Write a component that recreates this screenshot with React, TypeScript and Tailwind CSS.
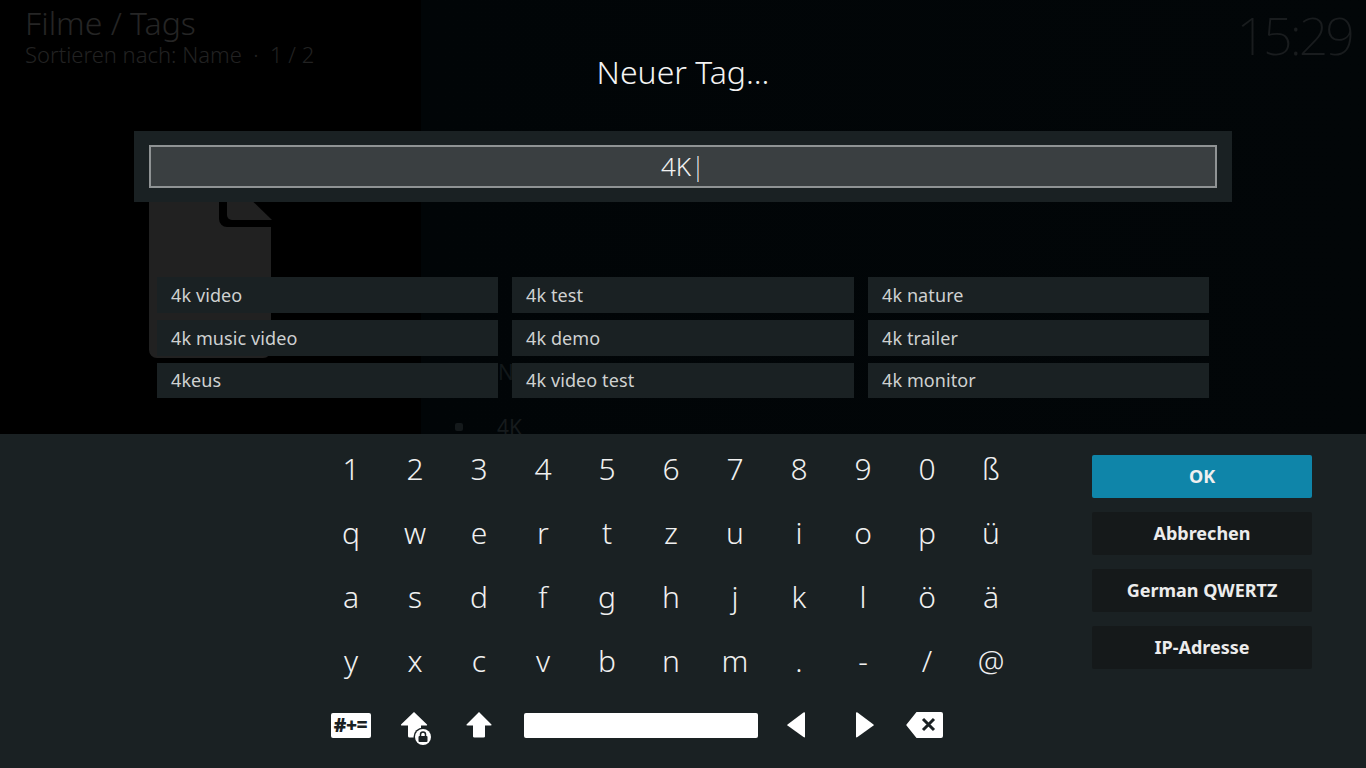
const rows = [
  ["1", "2", "3", "4", "5", "6", "7", "8", "9", "0", "ß"],
  ["q", "w", "e", "r", "t", "z", "u", "i", "o", "p", "ü"],
  ["a", "s", "d", "f", "g", "h", "j", "k", "l", "ö", "ä"],
  ["y", "x", "c", "v", "b", "n", "m", ".", "-", "/", "@"],
];

const suggestions = [
  ["4k video", "4k test", "4k nature"],
  ["4k music video", "4k demo", "4k trailer"],
  ["4keus", "4k video test", "4k monitor"],
];

const actions = ["Abbrechen", "German QWERTZ", "IP-Adresse"];

function Background() {
  return (
    <div className="absolute inset-0 flex bg-black">
      {/* LEFT COLUMN */}
      <div className="relative w-[421px] shrink-0 bg-black">
        <svg className="absolute left-[149px] top-[150px]" width="123" height="208" viewBox="0 0 123 208">
          <path d="M0 6 a6 6 0 0 1 6 -6 H70 V69 a8 8 0 0 0 8 8 H122 V200 a8 8 0 0 1 -8 8 H8 a8 8 0 0 1 -8 -8 Z" fill="#212121" />
          <path d="M78 34 H86 L123 70 H83 a5 5 0 0 1 -5 -5 Z" fill="#212121" />
        </svg>
      </div>
      {/* RIGHT COLUMN */}
      <div className="relative flex-1 bg-gradient-to-r from-[#010507] to-[#020608]">
        <p className="absolute left-[77px] top-[357px] text-[21px] text-[#12181a]">N</p>
        <span className="absolute left-[34px] top-[423px] h-2 w-2 rounded-[2px] bg-[#14191b]" />
        <p className="absolute left-[76px] top-[412px] text-[21px] text-[#161b1d]">4K</p>
      </div>
      {/* HEADER */}
      <div className="absolute left-[25px] top-[2px] font-light">
        <p className="text-[32px] leading-[42px] text-[#252525]">Filme / Tags</p>
        <p className="mt-[-3px] text-[22px] leading-[26px] text-[#222222]">Sortieren nach: Name &nbsp;·&nbsp; 1 / 2</p>
      </div>
      <p className="absolute right-[14px] top-0 text-[52px] leading-[70px] font-extralight tracking-[-3px] text-[#191c1e]">15:29</p>
    </div>
  );
}

function Key({ children }: { children: React.ReactNode }) {
  return <div className="flex h-16 w-16 items-center justify-center">{children}</div>;
}

export default function App() {
  return (
    <div className="relative h-[768px] w-[1366px] overflow-hidden font-['Noto_Sans',sans-serif] text-white">
      <Background />

      <div className="relative flex h-full flex-col">
        <h1 className="mt-[50px] h-[44px] text-center text-[32px] leading-[44px] font-light text-[#f4f4f4]">Neuer Tag...</h1>

        {/* INPUT */}
        <div className="mx-[134px] mt-[37px] h-[71px] w-[1098px] bg-[#1a2123] px-[15px] py-[14px]">
          <div className="flex h-[43px] items-center justify-center border-2 border-[#8f9394] bg-[#3a3f41] text-[26px] font-light text-[#f1f1f1]">
            4K<span className="font-extralight text-white">|</span>
          </div>
        </div>

        {/* SUGGESTIONS */}
        <div className="mt-[75px] ml-[157px] grid w-[1052px] grid-cols-[341px_342px_341px] grid-rows-[36px_36px_35px] gap-x-[14px] gap-y-[7px]">
          {suggestions.flat().map((label) => (
            <div key={label} className="flex items-center bg-[#1a2123] pl-[14px] text-[18px] tracking-[0.1px] text-[#cfd1d1]">
              {label}
            </div>
          ))}
        </div>

        {/* KEYBOARD PANEL */}
        <div className="mt-auto flex h-[334px] bg-[#1a2123]">
          <div className="mt-[3px] ml-[319px] w-[704px]">
            {rows.map((row, i) => (
              <div key={i} className="flex">
                {row.map((k) => (
                  <Key key={k}>
                    <span className="text-[30px] leading-none font-light text-[#f0f0f0]">{k}</span>
                  </Key>
                ))}
              </div>
            ))}
            {/* ICON ROW */}
            <div className="flex">
              <Key>
                <div className="mr-[1px] flex h-[25px] w-[40px] items-center justify-center rounded-[2px] bg-white text-[19px] leading-none font-black tracking-[-0.5px] text-[#1a2123]">#+=</div>
              </Key>
              <Key>
                <svg width="32" height="34" viewBox="0 0 32 34" className="mt-[8px] ml-[3px]">
                  <path d="M13 0 L26 12.5 Q26.5 13.5 25 13.5 H20 V24 Q20 25.5 18.5 25.5 H8.5 Q7 25.5 7 24 V13.5 H1 Q-0.5 13.5 0 12.5 Z" fill="#fff" />
                  <circle cx="22" cy="25" r="9.5" fill="#1a2123" />
                  <circle cx="22" cy="25" r="8" fill="#fff" />
                  <rect x="17.5" y="24" width="9" height="6" rx="1" fill="#1a2123" />
                  <path d="M19.5 24.5 V22.5 a2.5 2.5 0 0 1 5 0 V24.5" fill="none" stroke="#1a2123" strokeWidth="1.5" />
                </svg>
              </Key>
              <Key>
                <svg width="26" height="26" viewBox="0 0 26 26">
                  <path d="M13 0 L25.5 12.5 Q26 13.5 24.5 13.5 H19 V24.5 Q19 25.5 17.5 25.5 H8.5 Q7 25.5 7 24.5 V13.5 H1.5 Q0 13.5 0.5 12.5 Z" fill="#fff" />
                </svg>
              </Key>
              <div className="flex h-16 w-64 items-center justify-center">
                <div className="ml-[4px] h-[25px] w-[234px] rounded-[2px] bg-white" />
              </div>
              <Key>
                <svg width="18" height="26" viewBox="0 0 18 26" className="mr-[6px]">
                  <path d="M18 1 V24.5 Q18 26 16.5 25 L0.5 13.5 Q0 13 0.5 12.5 L16.5 0.5 Q18 0 18 1 Z" fill="#fff" />
                </svg>
              </Key>
              <Key>
                <svg width="18" height="26" viewBox="0 0 18 26" className="ml-[4px]">
                  <path d="M0 1 V24.5 Q0 26 1.5 25 L17.5 13.5 Q18 13 17.5 12.5 L1.5 0.5 Q0 0 0 1 Z" fill="#fff" />
                </svg>
              </Key>
              <Key>
                <svg width="37" height="26" viewBox="0 0 37 26" className="mr-[5px]">
                  <path d="M10.5 0 H35 Q37 0 37 2 V24 Q37 26 35 26 H10.5 L0.5 13.5 Q0 13 0.5 12.5 Z" fill="#fff" />
                  <path d="M17 7 L28 18 M28 7 L17 18" stroke="#1a2123" strokeWidth="3" fill="none" />
                </svg>
              </Key>
            </div>
          </div>

          {/* SIDE BUTTONS */}
          <div className="mt-[21px] ml-[69px] flex w-[220px] flex-col gap-[14px]">
            <div className="flex h-[43px] items-center justify-center rounded-[2px] bg-[#0f85a9] text-[18px] font-bold text-[#f0f0f0]">OK</div>
            {actions.map((label) => (
              <div key={label} className="flex h-[43px] items-center justify-center rounded-[2px] bg-[#15191a] text-[18px] font-bold text-[#ececec]">
                {label}
              </div>
            ))}
          </div>
        </div>
      </div>
    </div>
  );
}
